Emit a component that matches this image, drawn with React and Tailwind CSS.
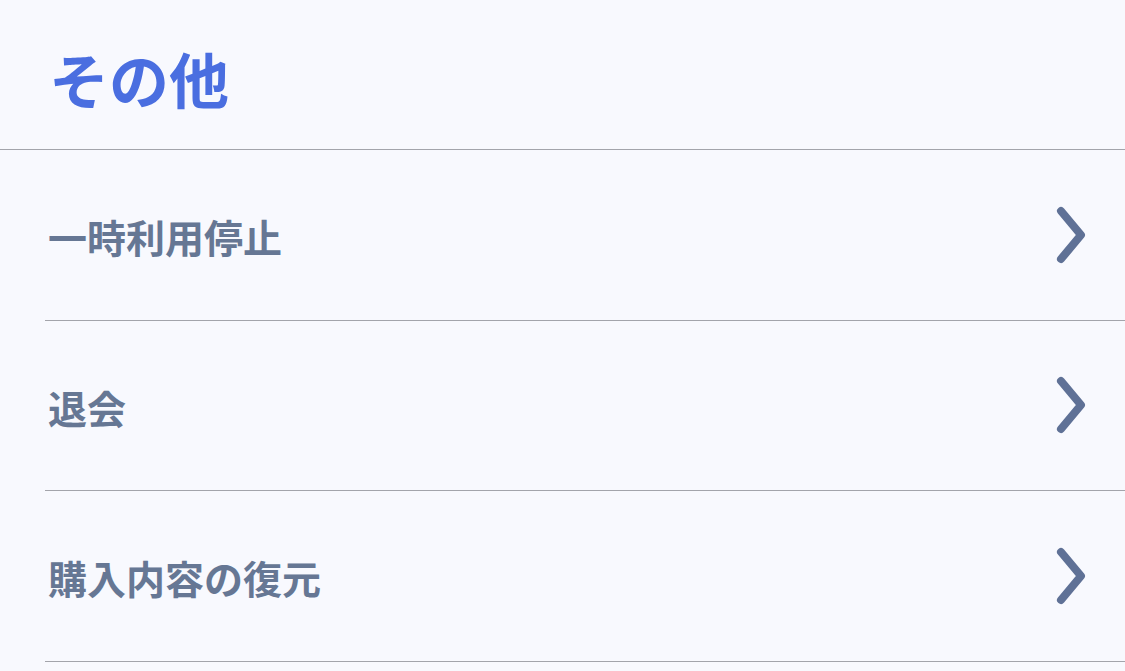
const items = ["一時利用停止", "退会", "購入内容の復元"];

function Chevron() {
  return (
    <svg width="36" height="60" viewBox="0 0 36 60" fill="none">
      <path
        d="M8 6 L28 30 L8 54"
        stroke="#5f7196"
        strokeWidth="8"
        strokeLinecap="round"
        strokeLinejoin="round"
      />
    </svg>
  );
}

export default function App() {
  return (
    <div
      className="min-h-[671px] w-full bg-[#f8f9fe]"
      style={{ fontFamily: '"Noto Sans CJK JP", "Noto Sans", sans-serif' }}
    >
      {/* Header */}
      <div className="h-[150px] flex items-center pl-[49px] border-b border-[#a3a4ab]">
        <h1 className="text-[60px] font-bold text-[#4a6ee0] leading-none mt-[6px]">
          その他
        </h1>
      </div>

      {/* Rows */}
      <div className="pl-[45px]">
        {items.map((label) => (
          <div
            key={label}
            className="h-[170.6px] flex items-center justify-between border-b border-[#a3a4ab] pl-[3px] pr-[36px]"
          >
            <span className="text-[39px] font-bold text-[#667794] leading-none mt-[4px]">
              {label}
            </span>
            <Chevron />
          </div>
        ))}
      </div>
    </div>
  );
}
